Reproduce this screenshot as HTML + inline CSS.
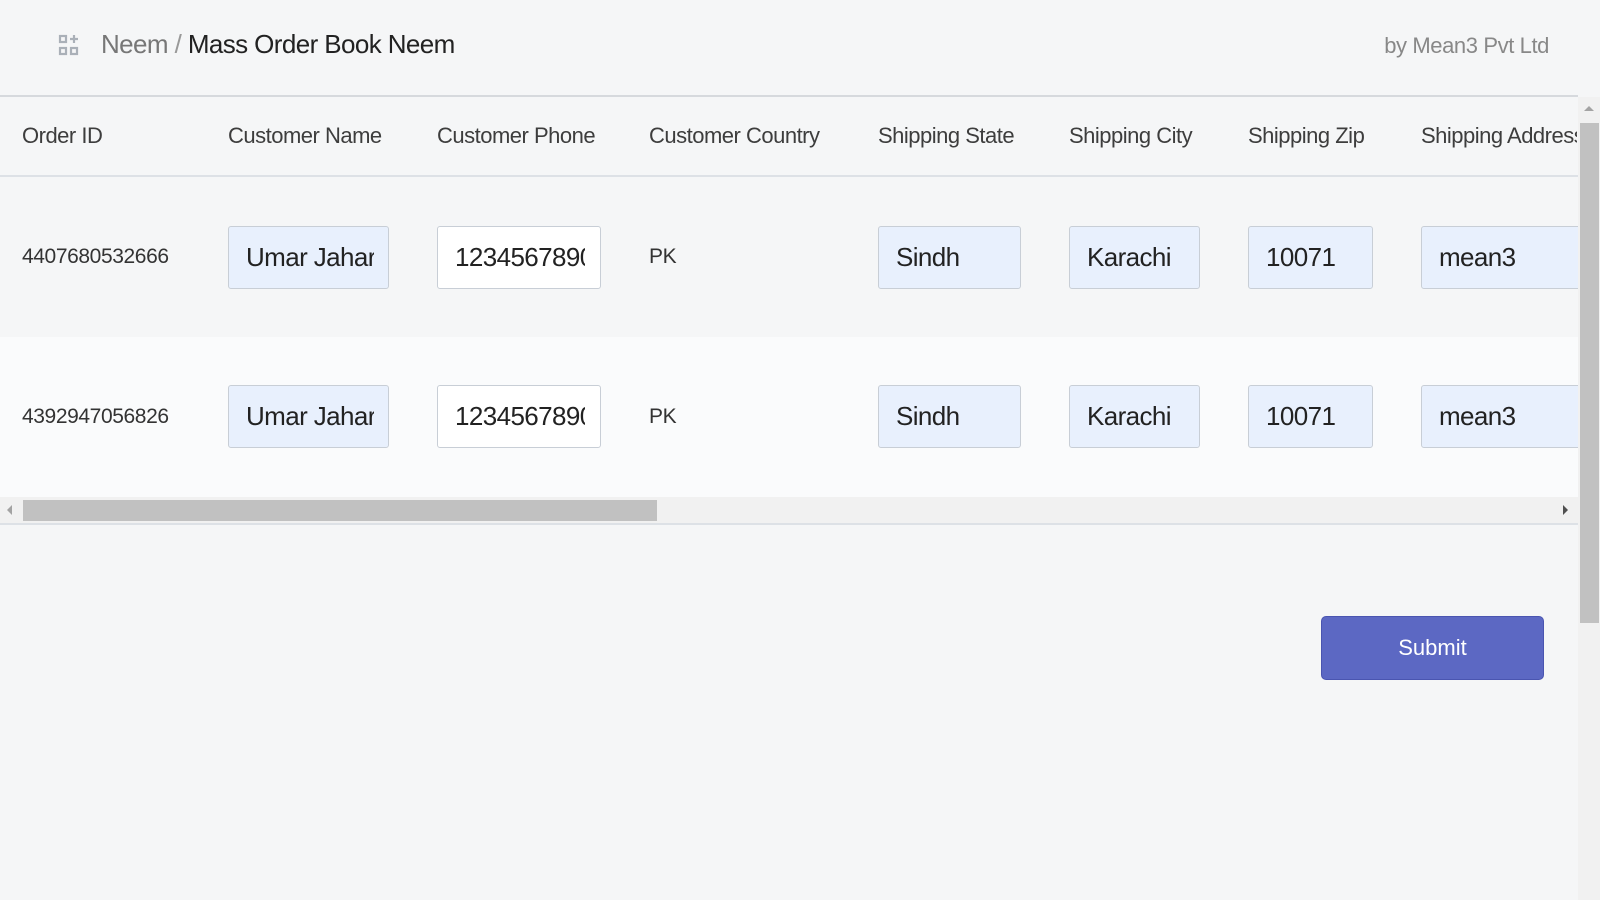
<!DOCTYPE html>
<html><head><style>
*{box-sizing:border-box;margin:0;padding:0}
body{width:1600px;height:900px;background:#f5f6f7;font-family:"Liberation Sans",sans-serif;position:relative;overflow:hidden;color:#333}
.abs{position:absolute}
.hdr{font-size:26px;top:29px;white-space:nowrap;letter-spacing:-0.6px}
.th{position:absolute;top:123px;font-size:22px;color:#3d3d3d;white-space:nowrap;letter-spacing:-0.5px}
.inp{position:absolute;height:63px;border:1px solid #c8ced6;border-radius:3px;background:#e8f0fd;font-size:26px;color:#222;padding-left:17px;line-height:61px;overflow:hidden;white-space:nowrap;letter-spacing:-0.6px}
.inp span{display:block;overflow:hidden}
.w{background:#fff}
.txt{position:absolute;font-size:21px;color:#333;white-space:nowrap;letter-spacing:-0.4px}
</style></head><body>
<svg class="abs" style="left:58px;top:34px" width="22" height="24" viewBox="0 0 22 24" fill="none" stroke="#aab0b8" stroke-width="2.2"><rect x="2" y="2" width="6" height="6"/><rect x="2" y="14" width="6" height="6"/><rect x="13" y="14" width="6" height="6"/><path d="M16 1v8M12 5h8"/></svg>
<div class="abs hdr" style="left:101px;color:#777">Neem <span style="color:#999">/</span> <span style="color:#222">Mass Order Book Neem</span></div>
<div class="abs" style="right:51px;top:33px;font-size:22px;color:#888;letter-spacing:-0.4px">by Mean3 Pvt Ltd</div>
<div class="abs" style="left:0;top:95px;width:1578px;height:2px;background:#d6d9dd"></div>
<div class="th" style="left:22px">Order ID</div>
<div class="th" style="left:228px">Customer Name</div>
<div class="th" style="left:437px">Customer Phone</div>
<div class="th" style="left:649px">Customer Country</div>
<div class="th" style="left:878px">Shipping State</div>
<div class="th" style="left:1069px">Shipping City</div>
<div class="th" style="left:1248px">Shipping Zip</div>
<div class="abs" style="left:1421px;top:123px;width:156px;overflow:hidden;font-size:22px;color:#3d3d3d;white-space:nowrap;letter-spacing:-0.5px">Shipping Address</div>
<div class="abs" style="left:0;top:175px;width:1578px;height:2px;background:#dde1e6"></div>
<div class="abs" style="left:0;top:337px;width:1578px;height:160px;background:#fafbfc"></div>

<div class="txt" style="left:22px;top:245px">4407680532666</div>
<div class="inp" style="left:228px;top:226px;width:161px"><span style="width:128px">Umar Jahar</span></div>
<div class="inp w" style="left:437px;top:226px;width:164px"><span style="width:130px">1234567890</span></div>
<div class="txt" style="left:649px;top:245px">PK</div>
<div class="inp" style="left:878px;top:226px;width:143px">Sindh</div>
<div class="inp" style="left:1069px;top:226px;width:131px">Karachi</div>
<div class="inp" style="left:1248px;top:226px;width:125px">10071</div>
<div class="inp" style="left:1421px;top:226px;width:170px">mean3</div>

<div class="txt" style="left:22px;top:405px">4392947056826</div>
<div class="inp" style="left:228px;top:385px;width:161px"><span style="width:128px">Umar Jahar</span></div>
<div class="inp w" style="left:437px;top:385px;width:164px"><span style="width:130px">1234567890</span></div>
<div class="txt" style="left:649px;top:405px">PK</div>
<div class="inp" style="left:878px;top:385px;width:143px">Sindh</div>
<div class="inp" style="left:1069px;top:385px;width:131px">Karachi</div>
<div class="inp" style="left:1248px;top:385px;width:125px">10071</div>
<div class="inp" style="left:1421px;top:385px;width:170px">mean3</div>

<div class="abs" style="left:0;top:497px;width:1578px;height:28px;background:#f1f1f1;border-bottom:2px solid #dde1e6"></div>
<div class="abs" style="left:7px;top:505px;width:0;height:0;border-top:5px solid transparent;border-bottom:5px solid transparent;border-right:5px solid #a3a3a3"></div>
<div class="abs" style="left:23px;top:500px;width:634px;height:21px;background:#c1c1c1"></div>
<div class="abs" style="left:1563px;top:505px;width:0;height:0;border-top:5px solid transparent;border-bottom:5px solid transparent;border-left:5px solid #505050"></div>

<div class="abs" style="left:1578px;top:97px;width:22px;height:803px;background:#f1f1f1"></div>
<div class="abs" style="left:1584px;top:106px;width:0;height:0;border-left:5px solid transparent;border-right:5px solid transparent;border-bottom:5px solid #a3a3a3"></div>
<div class="abs" style="left:1580px;top:123px;width:19px;height:500px;background:#c1c1c1"></div>

<div class="abs" style="left:1321px;top:616px;width:223px;height:64px;background:#5c68c3;border:1px solid #4a55b0;border-radius:5px;color:#fff;font-size:22px;text-align:center;line-height:62px">Submit</div>
</body></html>
